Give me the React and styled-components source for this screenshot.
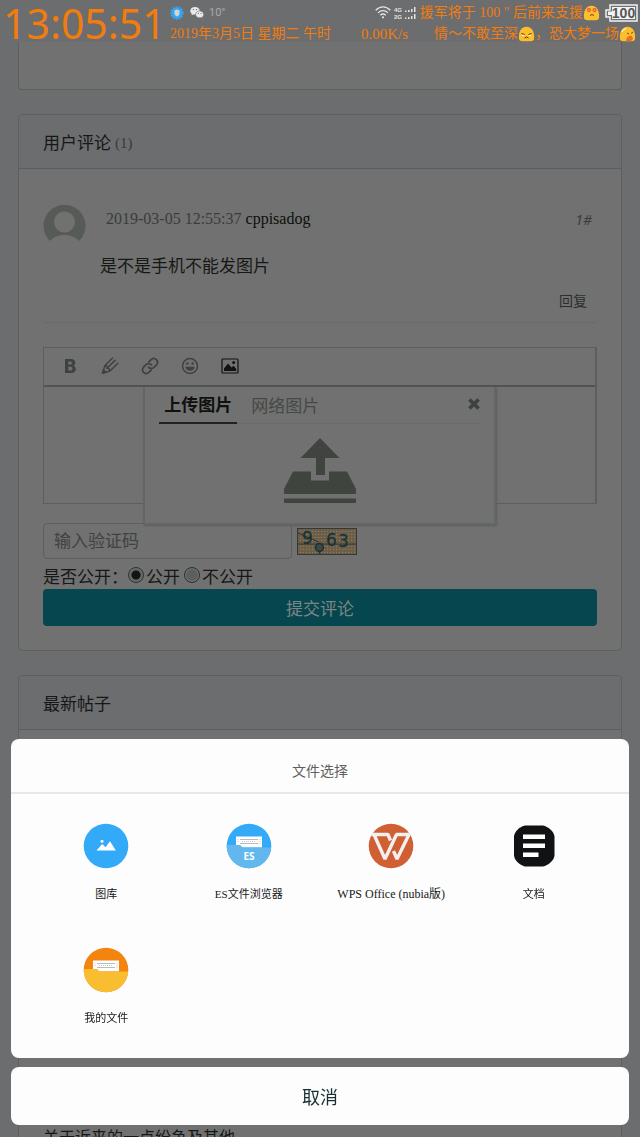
import React from "react";
import styled, { createGlobalStyle } from "styled-components";

const GlobalStyle = createGlobalStyle`
  *, *::before, *::after { box-sizing: border-box; }
  body { margin: 0; background: #6b6d6f; }
  body, button, input, textarea {
    font-family: "Liberation Serif", "Noto Sans CJK SC", serif;
  }
  button { border: 0; padding: 0; background: none; cursor: pointer; }
  h2 { margin: 0; font-weight: 400; }
  svg { display: block; flex: none; }
`;

const Screen = styled.div`
  height: 100vh;
  overflow: hidden;
  display: flex;
  flex-direction: column;
  color: #151815;
`;

/* ---------- status bar ---------- */

const StatusBar = styled.header`
  display: flex;
  flex: none;
  height: 42px;
  padding: 0 4px 0 3px;
  color: #f27c0e;
`;

const Clock = styled.time`
  width: 167px;
  flex: none;
  font-family: "Noto Sans", sans-serif;
  font-size: 41px;
  line-height: 47px;
  white-space: nowrap;
`;

const StatusInfo = styled.div`
  flex: 1;
  min-width: 0;
  padding-top: 2px;
`;

const StatusRow = styled.div`
  display: flex;
  align-items: center;
  height: 21px;
  font-size: 14px;
  line-height: 20px;
  white-space: nowrap;
`;

const Temperature = styled.span`
  margin-left: 5px;
  font-family: Roboto, sans-serif;
  font-size: 11px;
  color: #a9acaa;
`;

const Tray = styled.div`
  display: flex;
  align-items: center;
  gap: 3px;
  margin-left: auto;
`;

const Speed = styled.span`
  margin: 0 26px 0 auto;
  font-size: 15px;
`;

const Quote = styled.span`
  display: flex;
  align-items: center;
`;

const Battery = styled.span`
  display: flex;
  align-items: center;
  margin: 0 -2px 0 2px;
`;

/* ---------- cards ---------- */

const Main = styled.main`
  flex: none;
  padding: 0 18px;
`;

const Card = styled.section`
  margin-bottom: 24px;
  border: 1px solid #5c605e;
  border-radius: 4px;
  background: #717171;
`;

const CardEnd = styled.div`
  height: 48px;
  margin-bottom: 24px;
  border: 1px solid #5c605e;
  border-top: 0;
  border-radius: 0 0 4px 4px;
  background: #717171;
`;

const CardHeader = styled.header`
  display: flex;
  align-items: center;
  gap: 4px;
  height: 54px;
  padding: 4px 24px 0;
  border-bottom: 1px solid #595d5c;
  border-radius: 3px 3px 0 0;
  background: #6b6d6f;
`;

const CardTitle = styled.h2`
  font-size: 17px;
  line-height: 24px;
`;

const Count = styled.span`
  font-size: 15px;
  color: #383c38;
`;

const CardBody = styled.div`
  padding: 36px 24px 24px;
`;

const Comment = styled.article`
  display: grid;
  grid-template-columns: 57px 1fr;
  padding-bottom: 10px;
  border-bottom: 1px solid #696b6a;
`;

const CommentMeta = styled.div`
  display: flex;
  align-items: center;
  gap: 4px;
  height: 28px;
  padding: 0 5px 0 6px;
  font-size: 16px;
  color: #393d39;
`;

const Author = styled.a`
  color: #0c0f0c;
  text-decoration: none;
`;

const Floor = styled.em`
  margin-left: auto;
  font-family: "Noto Sans", sans-serif;
  font-size: 14px;
`;

const CommentText = styled.p`
  margin: 21px 0 12px;
  font-size: 17px;
  line-height: 26px;
`;

const ReplyLink = styled.a`
  display: block;
  width: max-content;
  margin: 0 10px 0 auto;
  font-size: 14px;
  line-height: 20px;
  color: #2b2f2b;
  text-decoration: none;
`;

/* ---------- editor ---------- */

const Editor = styled.div`
  position: relative;
  margin-top: 24px;
  border: 1px solid #5b5f5d;
  border-right-width: 2px;
`;

const Toolbar = styled.div`
  display: flex;
  align-items: center;
  height: 39px;
  padding: 0 0 2px 6px;
  border-bottom: 2px solid #505452;
`;

const ToolButton = styled.button`
  display: flex;
  justify-content: center;
  width: 40px;
  color: ${(p) => (p.$active ? "#101310" : "#3e433f")};
`;

const EditorArea = styled.textarea`
  display: block;
  width: 100%;
  height: 116px;
  border: 0;
  outline: 0;
  resize: none;
  background: transparent;
`;

const UploadPanel = styled.div`
  position: absolute;
  top: 39px;
  left: 18%;
  right: 18%;
  height: 138px;
  padding: 0 14px;
  border: 2px solid #626664;
  border-top: 0;
  background: #717171;
  box-shadow: 1px 1px 2px #5b5f5d;
`;

const TabBar = styled.div`
  display: flex;
  height: 37px;
  border-bottom: 1px solid #696b6a;
`;

const Tab = styled.button`
  height: 37px;
  padding: 3px 5px 0;
  margin-right: 9px;
  font-size: 17px;
  line-height: 24px;
  font-weight: ${(p) => (p.$active ? 700 : 400)};
  color: ${(p) => (p.$active ? "#0e110e" : "#454945")};
  border-bottom: ${(p) => (p.$active ? "2px solid #202320" : "0")};
`;

const CloseButton = styled.button`
  margin: 0 0 2px auto;
`;

const UploadButton = styled.button`
  display: block;
  margin: 14px auto 0;
`;

/* ---------- comment form ---------- */

const CodeRow = styled.div`
  display: flex;
  align-items: center;
  gap: 5px;
  margin-top: 19px;
`;

const CodeInput = styled.input`
  width: 45%;
  height: 36px;
  padding: 2px 10px 0;
  border: 1px solid #5b5f5d;
  border-radius: 4px;
  background: transparent;
  font-size: 17px;
  &::placeholder { color: #3f433f; opacity: 1; }
`;

const Visibility = styled.fieldset`
  display: flex;
  align-items: center;
  height: 30px;
  margin: 0;
  padding: 8px 0 0;
  border: 0;
  font-size: 17px;
  line-height: 22px;
`;

const RadioLabel = styled.label`
  display: flex;
  align-items: center;
  gap: 2px;
  margin-right: 4px;
`;

const Radio = styled.input`
  appearance: none;
  width: 16px;
  height: 16px;
  margin: 0 0 6px;
  border: 1px solid #2d312e;
  border-radius: 50%;
  background: #5c605d;
  box-shadow: inset 0 0 0 1px #737573;
  &:checked {
    background: radial-gradient(circle, #111411 0 4px, #5f6360 5px);
  }
`;

const SubmitButton = styled.button`
  display: block;
  width: 100%;
  height: 37px;
  border-radius: 4px;
  background: #06464f;
  color: #7c8583;
  font-size: 17px;
`;

const PostList = styled.div`
  height: 430px;
  padding: 396px 24px 0;
`;

const PostLink = styled.a`
  font-size: 16px;
  line-height: 24px;
  color: #151815;
  text-decoration: none;
`;

/* ---------- chooser sheet ---------- */

const Sheet = styled.div`
  position: fixed;
  left: 11px;
  right: 11px;
  bottom: 12px;
  display: flex;
  flex-direction: column;
  gap: 9px;
`;

const Chooser = styled.section`
  border-radius: 8px;
  background: #fdfdfd;
`;

const ChooserTitle = styled.h2`
  height: 55px;
  padding-top: 14px;
  border-bottom: 2px solid #e7e8e7;
  font-size: 14px;
  line-height: 38px;
  text-align: center;
  color: #5d615e;
`;

const AppGrid = styled.div`
  display: grid;
  grid-template-columns: repeat(4, 1fr);
  grid-auto-rows: 124px;
  padding: 29px 24px 0;
  height: 264px;
`;

const AppButton = styled.button`
  display: flex;
  flex-direction: column;
  align-items: center;
  gap: 15px;
  color: #151815;
`;

const AppLabel = styled.span`
  font-size: ${(p) => (p.$latin ? 12 : 11)}px;
  line-height: 20px;
  white-space: nowrap;
`;

const CancelButton = styled.button`
  height: 58px;
  border-radius: 8px;
  background: #fdfdfd;
  font-family: "Noto Sans CJK SC", sans-serif;
  font-size: 18px;
  color: #173033;
`;

/* ---------- drawings ---------- */

const GuardIcon = () => (
  <svg width="14" height="14" viewBox="0 0 14 14">
    <circle cx="7" cy="7" r="5.6" fill="#35a6f5" />
    <circle cx="7" cy="7" r="6" fill="none" stroke="#35a6f5" strokeWidth="1.6" strokeDasharray="1.7 1.2" />
    <path d="M4.5 4.6 7 3.6l2.5 1v2.6c0 1.6-1.2 2.6-2.5 3.3-1.3-.7-2.5-1.7-2.5-3.3z" fill="#d5d4d0" />
  </svg>
);

const ChatSvg = styled.svg`
  margin-left: 6px;
`;

const ChatIcon = () => (
  <ChatSvg width="14" height="13" viewBox="0 0 14 13">
    <path d="M5 1C2.300 1 .3 2.700.3 4.900c0 1.200.6 2.200 1.600 2.900L1.500 9.300l1.800-.9c.6.2 1.100.2 1.700.2C7.700 8.600 9.700 7 9.700 4.800 9.700 2.700 7.700 1 5 1z" fill="#e8e9e8" />
    <path d="M9.700 5c-2.400 0-4.100 1.500-4.100 3.400s1.700 3.400 4.100 3.400c.5 0 1-.1 1.400-.2l1.500.8-.4-1.300c.9-.6 1.500-1.600 1.500-2.700C13.700 6.500 12 5 9.700 5z" fill="#e8e9e8" stroke="#6b6d6f" strokeWidth=".6" />
    <g fill="#6b6d6f">
      <circle cx="3.5" cy="3.6" r=".7" />
      <circle cx="6.6" cy="3.6" r=".7" />
      <circle cx="8.4" cy="7.5" r=".6" />
      <circle cx="11" cy="7.5" r=".6" />
    </g>
  </ChatSvg>
);

const WifiIcon = () => (
  <svg width="16" height="13" viewBox="0 0 16 13" fill="none" stroke="#e3e5e3" strokeWidth="1.3">
    <path d="M.7 4.300C5-.2 11-.2 15.300 4.300M3 6.900c3-3 7-3 10 0M5.300 9.300c1.700-1.600 3.700-1.600 5.400 0" />
    <circle cx="8" cy="11.3" r="1.1" fill="#e3e5e3" stroke="none" />
  </svg>
);

const SignalIcon = () => (
  <svg width="23" height="14" viewBox="0 0 23 14">
    <g fill="#e3e5e3" fontFamily="Liberation Sans, sans-serif" fontSize="6" fontWeight="700">
      <text x="0" y="6">4G</text>
      <text x="0" y="13">2G</text>
      <path d="M11 4.500h1.500v1.500H11zM14 4h1.500v2H14zM17 3h1.500v3H17zM20 1h1.500v5H20zM11 11.500h1.500V13H11zM14 11h1.500v2H14zM17 10h1.500v3H17zM20 8h1.500v5H20z" />
    </g>
  </svg>
);

const Blob = ({ mood }) => (
  <svg width="17" height="16" viewBox="0 0 17 16">
    <path d="M1 13C.3 6 3 .8 8.500.8S16.700 6 16 13c-.2 1.700-1.800 2.200-3.500 2.200h-8C2.800 15.200 1.200 14.700 1 13z" fill="#fbbe2c" />
    {mood === "love" && (
      <g>
        <circle cx="6" cy="5" r="2" fill="#e6513b" />
        <circle cx="11.5" cy="5" r="2" fill="#e6513b" />
        <circle cx="6" cy="5" r=".7" fill="#fbd9a0" />
        <circle cx="11.5" cy="5" r=".7" fill="#fbd9a0" />
        <path d="M7 10.500q2-2 4 0" stroke="#7a3b10" fill="none" />
      </g>
    )}
    {mood === "sad" && (
      <g stroke="#5a3810" fill="none">
        <path d="M3.500 7.500l3 1M13.500 7.500l-3 1M6.500 12q2-2 4 0" />
        <path d="M4 9.500h2M11 9.500h2" stroke="#fff" />
      </g>
    )}
    {mood === "hurt" && (
      <g>
        <path d="M3 6q1-3 4-3.500" stroke="#fff" fill="none" />
        <path d="M8 7l2 1M14 6l-2 1.500" stroke="#8a4510" />
        <path d="M7 15c0-4 3-6 6-5l1 3-2 2z" fill="#e96f25" />
      </g>
    )}
  </svg>
);

const BatteryIcon = () => (
  <svg width="33" height="18" viewBox="0 0 33 18">
    <path d="M5 1h27v16H5v-4H1V6h4z" fill="none" stroke="#f2f3f2" strokeWidth="1.5" />
    <path d="M7 3h23v12H7v-4H3V7.500h4z" fill="#f2f3f2" />
    <text x="18.5" y="14" textAnchor="middle" fontFamily="Liberation Sans, sans-serif" fontSize="14" fontWeight="700" fill="#555857">100</text>
  </svg>
);

const Avatar = () => (
  <svg width="43" height="38" viewBox="0 0 43 38">
    <path d="M7 36A21 21 0 1 1 36 36C29 28 14 28 7 36z" fill="#565b57" />
    <circle cx="21.5" cy="17" r="10.5" fill="#717171" />
  </svg>
);

const BoldIcon = () => (
  <svg width="14" height="16" viewBox="0 0 14 16">
    <path fillRule="evenodd" fill="currentColor" d="M2 1h6c3 0 4.300 1.500 4.300 3.700 0 1.500-.7 2.500-1.900 3 1.500.4 2.400 1.600 2.400 3.300C12.800 13.600 11 15 8 15H2zm3.300 2.500v3h1.900c1.100 0 1.700-.5 1.700-1.500s-.6-1.500-1.700-1.500zm0 5.300v3.700h2.200c1.200 0 1.900-.6 1.900-1.800s-.7-1.900-1.900-1.900z" />
  </svg>
);

const PencilIcon = () => (
  <svg width="18" height="18" viewBox="0 0 18 18" fill="none" stroke="currentColor" strokeWidth="1.5" strokeLinejoin="round" strokeLinecap="round">
    <path d="M11.500 1 4 8.500 1.500 16.200 9 14l7.800-7.800M14 3.400 6 11.300M4 8.500c1.500 0 2.300 1 2 2.800 1.700-.4 2.800.6 3 2.700" />
    <path d="M1.500 16.200 2.500 13l2 2z" fill="currentColor" />
  </svg>
);

const LinkIcon = () => (
  <svg width="18" height="18" viewBox="0 0 24 24" fill="none" stroke="currentColor" strokeWidth="2.3" strokeLinecap="round">
    <path d="M10 13.500a5 5 0 0 0 7.300.2l3.600-3.600a5 5 0 0 0-7-7L10.500 6.500" />
    <path d="M14 10.500a5 5 0 0 0-7.300-.2l-3.600 3.600a5 5 0 0 0 7 7l3.400-3.400" />
  </svg>
);

const SmileIcon = () => (
  <svg width="18" height="18" viewBox="0 0 18 18">
    <circle cx="9" cy="9" r="7.5" fill="none" stroke="currentColor" strokeWidth="1.5" />
    <circle cx="6.3" cy="6.5" r="1.3" fill="currentColor" />
    <circle cx="11.7" cy="6.5" r="1.3" fill="currentColor" />
    <path d="M4.300 9.800h9.400c-.5 2.500-2.300 4-4.700 4s-4.200-1.500-4.700-4z" fill="currentColor" />
  </svg>
);

const PictureIcon = () => (
  <svg width="18" height="16" viewBox="0 0 18 16">
    <rect x="1" y="1" width="16" height="14" rx="1" fill="none" stroke="currentColor" strokeWidth="1.2" />
    <path d="M3 13v-2.500L7 5.500l3.500 4 2-1.700 2.700 3V13z" fill="currentColor" />
    <circle cx="12.7" cy="4.5" r="1.5" fill="currentColor" />
  </svg>
);

const CloseIcon = () => (
  <svg width="12" height="12" viewBox="0 0 12 12" stroke="#3c413d" strokeWidth="3.6">
    <path d="M1.400 1.400l9.200 9.200M10.600 1.400l-9.200 9.200" />
  </svg>
);

const UploadIcon = () => (
  <svg width="72" height="65" viewBox="0 0 72 65" fill="#3f443f">
    <path d="M36 0l19.500 20H41v17h-9V20H16.500z" />
    <path d="M9 33.500h18v9h18v-9h18L72 51v5H0v-5zM0 60.500h72V65H0z" />
  </svg>
);

const Captcha = () => (
  <svg width="60" height="27" viewBox="0 0 60 27" role="img" aria-label="验证码">
    <defs>
      <pattern id="grain" width="3" height="3" patternUnits="userSpaceOnUse">
        <rect width="3" height="3" fill="#6e5f4a" />
        <rect width="1" height="1" fill="#a2763d" />
        <rect x="2" y="1" width="1" height="1" fill="#565b56" />
      </pattern>
    </defs>
    <rect x=".5" y=".5" width="59" height="26" fill="url(#grain)" stroke="#343a39" />
    <path d="M1 5l21 9M0 16h60" stroke="#243536" />
    <g fontFamily="DejaVu Sans, sans-serif" fontSize="17" fill="#183338" stroke="#183338" strokeWidth=".3">
      <text x="5" y="16">9</text>
      <text x="29" y="18">6</text>
      <text x="41" y="19">3</text>
    </g>
    <circle cx="22.5" cy="19.5" r="4" fill="#3d4744" stroke="#183338" strokeWidth="1.5" />
    <path d="M22 23l1 3" stroke="#183338" strokeWidth="1.5" />
  </svg>
);

const GalleryIcon = () => (
  <svg width="46" height="46" viewBox="0 0 46 46">
    <circle cx="23" cy="23" r="22.3" fill="#33aaf8" />
    <circle cx="19" cy="18.3" r="1.5" fill="#fff" />
    <path d="M13.500 27.500l5.700-6.500 3.300 3.300 4.500-6 5.800 9.200z" fill="#fff" />
  </svg>
);

const FolderIcon = ({ id, back, front, children }) => (
  <svg width="46" height="46" viewBox="0 0 46 46">
    <clipPath id={id}><circle cx="23" cy="23" r="22.3" /></clipPath>
    <g clipPath={`url(#${id})`}>
      <rect width="46" height="46" fill={back} />
      <path d="M0 22h14l3 2.500h29V46H0z" fill={front} />
      <path d="M10 13.500h26v10.700H16.500L14 22h-4z" fill="#fff" />
      <path d="M14 16.500h18M14 20.500h18" stroke="#b8bcc0" />
      <path d="M16 18.500h14M12 16v4M34 16v5" stroke="#c6c9cc" strokeDasharray="1 1" />
      {children}
    </g>
  </svg>
);

const WpsIcon = () => (
  <svg width="46" height="46" viewBox="0 0 46 46">
    <circle cx="23" cy="23" r="22.3" fill="#d15f34" />
    <path d="M3.500 11.500H20l2.500 6M6 11.500l11 24.500 11.500-24.500H41L29 36l-3.500-8" fill="none" stroke="#f2f1ef" strokeWidth="3.4" strokeLinejoin="bevel" />
  </svg>
);

const DocumentIcon = () => (
  <svg width="46" height="46" viewBox="0 0 46 46">
    <path d="M14 2.500h18c5 1 11 6 11.500 11v19c-.5 5-6.500 10-11.500 11H14c-5-1-10.500-6-11-11v-19c.5-5 6-10 11-11z" fill="#101213" />
    <path d="M12 11.500h22V16H12zM12 20.500h22V25H12zM12 29.500h15.500V34H12z" fill="#fff" />
  </svg>
);

const apps = [
  { name: "图库", icon: <GalleryIcon /> },
  {
    name: "ES文件浏览器",
    icon: (
      <FolderIcon id="es-clip" back="#33aaf8" front="#62b8ee">
        <text x="23" y="37" textAnchor="middle" fontFamily="Noto Sans, sans-serif" fontSize="10" fontWeight="700" fill="#fff">ES</text>
      </FolderIcon>
    ),
  },
  { name: "WPS Office (nubia版)", icon: <WpsIcon />, latin: true },
  { name: "文档", icon: <DocumentIcon /> },
  { name: "我的文件", icon: <FolderIcon id="files-clip" back="#f3850f" front="#f8bd30" /> },
];

const tools = [
  { name: "加粗", icon: <BoldIcon /> },
  { name: "画笔", icon: <PencilIcon /> },
  { name: "链接", icon: <LinkIcon /> },
  { name: "表情", icon: <SmileIcon /> },
  { name: "图片", icon: <PictureIcon />, active: true },
];

export default function App() {
  return (
    <>
      <GlobalStyle />
      <Screen>
        <StatusBar>
          <Clock>13:05:51</Clock>
          <StatusInfo>
            <StatusRow>
              <GuardIcon />
              <ChatIcon />
              <Temperature>10°</Temperature>
              <Tray>
                <WifiIcon />
                <SignalIcon />
                <Quote>援军将于 100 " 后前来支援<Blob mood="love" /></Quote>
                <Battery><BatteryIcon /></Battery>
              </Tray>
            </StatusRow>
            <StatusRow>
              <span>2019年3月5日 星期二 午时</span>
              <Speed>0.00K/s</Speed>
              <Quote>情～不敢至深<Blob mood="sad" />，恐大梦一场<Blob mood="hurt" /></Quote>
            </StatusRow>
          </StatusInfo>
        </StatusBar>

        <Main>
          <CardEnd />
          <Card>
            <CardHeader>
              <CardTitle>用户评论</CardTitle>
              <Count>(1)</Count>
            </CardHeader>
            <CardBody>
              <Comment>
                <Avatar />
                <div>
                  <CommentMeta>
                    <time>2019-03-05 12:55:37</time>
                    <Author href="#author">cppisadog</Author>
                    <Floor>1#</Floor>
                  </CommentMeta>
                  <CommentText>是不是手机不能发图片</CommentText>
                  <ReplyLink href="#reply">回复</ReplyLink>
                </div>
              </Comment>

              <Editor>
                <Toolbar>
                  {tools.map((t) => (
                    <ToolButton key={t.name} type="button" aria-label={t.name} $active={t.active}>
                      {t.icon}
                    </ToolButton>
                  ))}
                </Toolbar>
                <EditorArea aria-label="评论内容" />
                <UploadPanel>
                  <TabBar>
                    <Tab type="button" $active>上传图片</Tab>
                    <Tab type="button">网络图片</Tab>
                    <CloseButton type="button" aria-label="关闭"><CloseIcon /></CloseButton>
                  </TabBar>
                  <UploadButton type="button" aria-label="选择图片"><UploadIcon /></UploadButton>
                </UploadPanel>
              </Editor>

              <CodeRow>
                <CodeInput placeholder="输入验证码" aria-label="输入验证码" />
                <Captcha />
              </CodeRow>
              <Visibility>
                <span>是否公开：</span>
                <RadioLabel><Radio type="radio" name="visibility" defaultChecked />公开</RadioLabel>
                <RadioLabel><Radio type="radio" name="visibility" />不公开</RadioLabel>
              </Visibility>
              <SubmitButton type="button">提交评论</SubmitButton>
            </CardBody>
          </Card>

          <Card>
            <CardHeader>
              <CardTitle>最新帖子</CardTitle>
            </CardHeader>
            <PostList>
              <PostLink href="#post">关于近来的一点纷争及其他</PostLink>
            </PostList>
          </Card>
        </Main>
      </Screen>

      <Sheet role="dialog" aria-label="文件选择">
        <Chooser>
          <ChooserTitle>文件选择</ChooserTitle>
          <AppGrid>
            {apps.map((app) => (
              <AppButton key={app.name} type="button">
                {app.icon}
                <AppLabel $latin={app.latin}>{app.name}</AppLabel>
              </AppButton>
            ))}
          </AppGrid>
        </Chooser>
        <CancelButton type="button">取消</CancelButton>
      </Sheet>
    </>
  );
}
